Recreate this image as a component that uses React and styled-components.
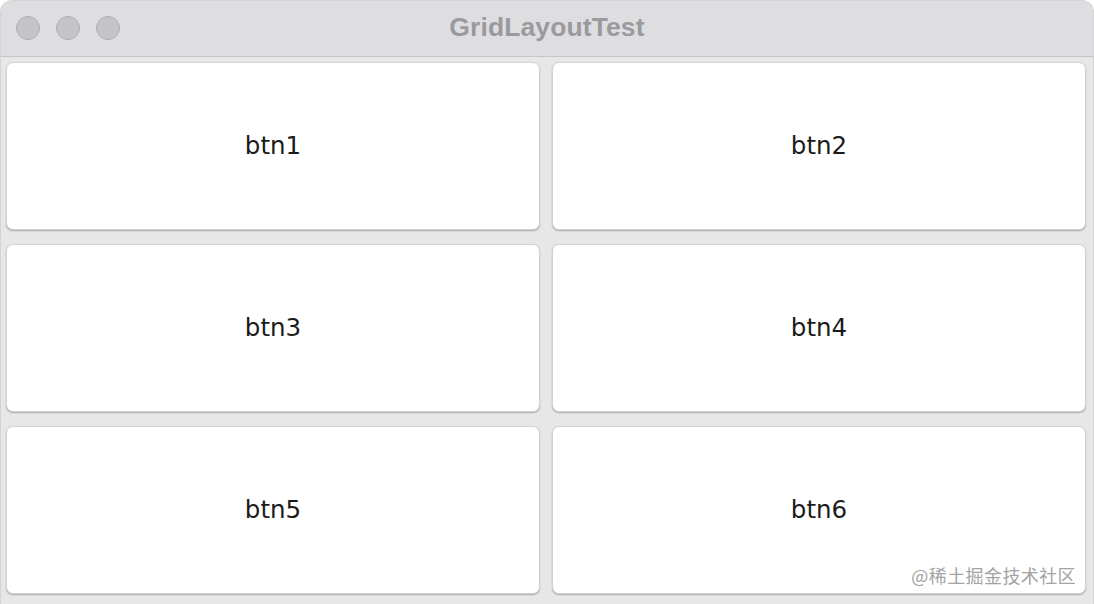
import React from "react";
import styled, { createGlobalStyle } from "styled-components";

const Global = createGlobalStyle`
  html, body { margin: 0; padding: 0; background: #ffffff; }
  body { width: 1094px; height: 604px; overflow: hidden; }
  #root { width: 1094px; height: 604px; }
`;

const Window = styled.div`
  position: relative;
  width: 1094px;
  height: 604px;
  display: flex;
  flex-direction: column;
  background: #e7e7e7;
  border-radius: 12px 12px 0 0;
  overflow: hidden;
  box-sizing: border-box;
  border: 1px solid #d4d4d6;
  border-bottom: none;
`;

const TitleBar = styled.div`
  position: relative;
  height: 55px;
  flex: none;
  display: flex;
  align-items: center;
  justify-content: center;
  background: #dedee1;
  border-bottom: 1px solid #c6c6c8;
`;

const Lights = styled.div`
  position: absolute;
  left: 15px;
  top: 15px;
  display: flex;
  gap: 16px;
`;

const Light = styled.span`
  width: 24px;
  height: 24px;
  border-radius: 50%;
  box-sizing: border-box;
  background: #c5c5c8;
  border: 1px solid #adadb0;
`;

const Title = styled.div`
  font-family: "Liberation Sans", Arial, sans-serif;
  font-weight: 700;
  font-size: 26.5px;
  color: #9a9a9e;
  letter-spacing: 0.1px;
  margin-top: -2px;
`;

const Grid = styled.div`
  flex: 1;
  display: grid;
  grid-template-columns: 1fr 1fr;
  grid-template-rows: repeat(3, 1fr);
  column-gap: 12px;
  row-gap: 14px;
  padding: 5px 7px 10px 5px;
`;

const Button = styled.button`
  background: #ffffff;
  border: 1px solid #d2d2d2;
  border-radius: 7px;
  box-shadow: 0 1px 1.5px rgba(0, 0, 0, 0.28);
  font-family: "DejaVu Sans", "Lucida Grande", sans-serif;
  font-size: 24.5px;
  color: #1b1b1b;
  display: flex;
  align-items: center;
  justify-content: center;
  padding: 0;
  padding-bottom: 2px;
  cursor: default;
`;

const Watermark = styled.div`
  position: absolute;
  right: 17px;
  bottom: 16px;
  font-family: "Noto Sans CJK SC", "Noto Sans", sans-serif;
  font-size: 18px;
  color: #a3a3a3;
  letter-spacing: 0.4px;
`;

export default function App() {
  const buttons = ["btn1", "btn2", "btn3", "btn4", "btn5", "btn6"];
  return (
    <>
      <Global />
      <Window>
        <TitleBar>
          <Lights>
            <Light />
            <Light />
            <Light />
          </Lights>
          <Title>GridLayoutTest</Title>
        </TitleBar>
        <Grid>
          {buttons.map((b) => (
            <Button key={b}>{b}</Button>
          ))}
        </Grid>
        <Watermark>@稀土掘金技术社区</Watermark>
      </Window>
    </>
  );
}
